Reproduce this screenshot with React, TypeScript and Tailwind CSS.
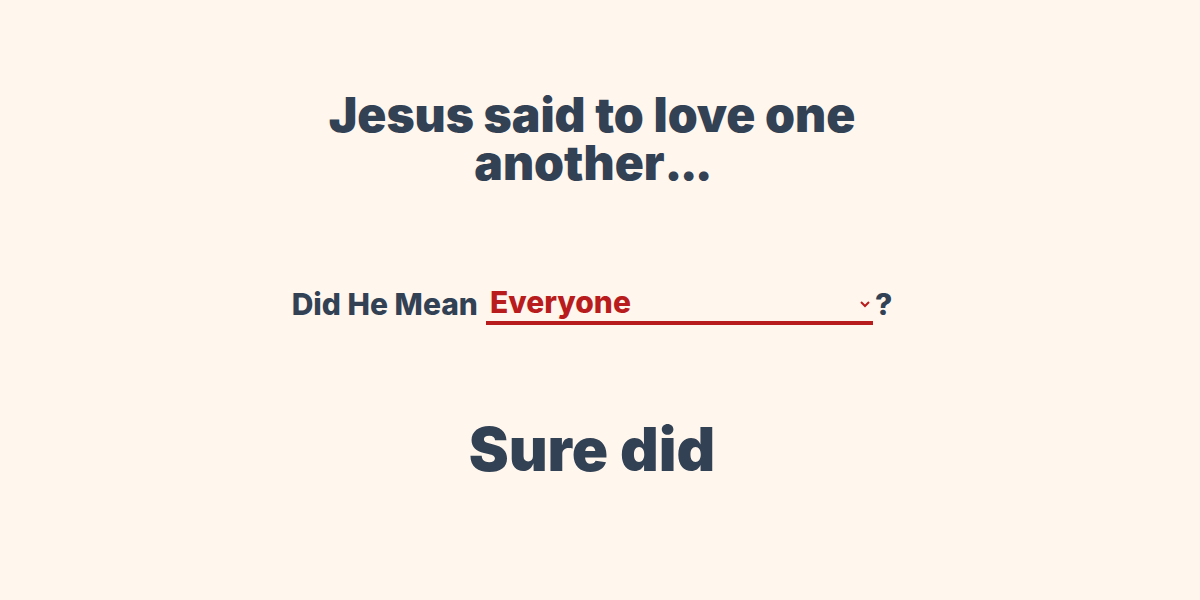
import { useState } from "react";

const options = ["Everyone", "Only Christians", "Only Americans", "Only people like me"];

export default function App() {
  const [who, setWho] = useState("Everyone");

  return (
    <div
      className="min-h-screen bg-[#fff7ed] text-[#334155] flex flex-col items-center pt-[91px] pr-4"
      style={{ fontFamily: "Inter, 'Noto Sans', sans-serif" }}
    >
      <h1 className="max-w-xl text-center text-5xl leading-none font-black">
        Jesus said to love one another
        <span className="tracking-[-0.06em]">...</span>
      </h1>

      <div className="mt-[96px] flex items-center text-3xl font-extrabold">
        <span>Did He Mean</span>
        <select
          value={who}
          onChange={(e) => setWho(e.target.value)}
          className="ml-2 w-[387px] bg-transparent border-b-4 border-[#b91c1c] text-[#b91c1c] font-extrabold pr-2 outline-none"
        >
          {options.map((o) => (
            <option key={o} value={o}>
              {o}
            </option>
          ))}
        </select>
        <span className="ml-0.5">?</span>
      </div>

      <p className="mt-[94px] text-6xl font-black">Sure did</p>
    </div>
  );
}
